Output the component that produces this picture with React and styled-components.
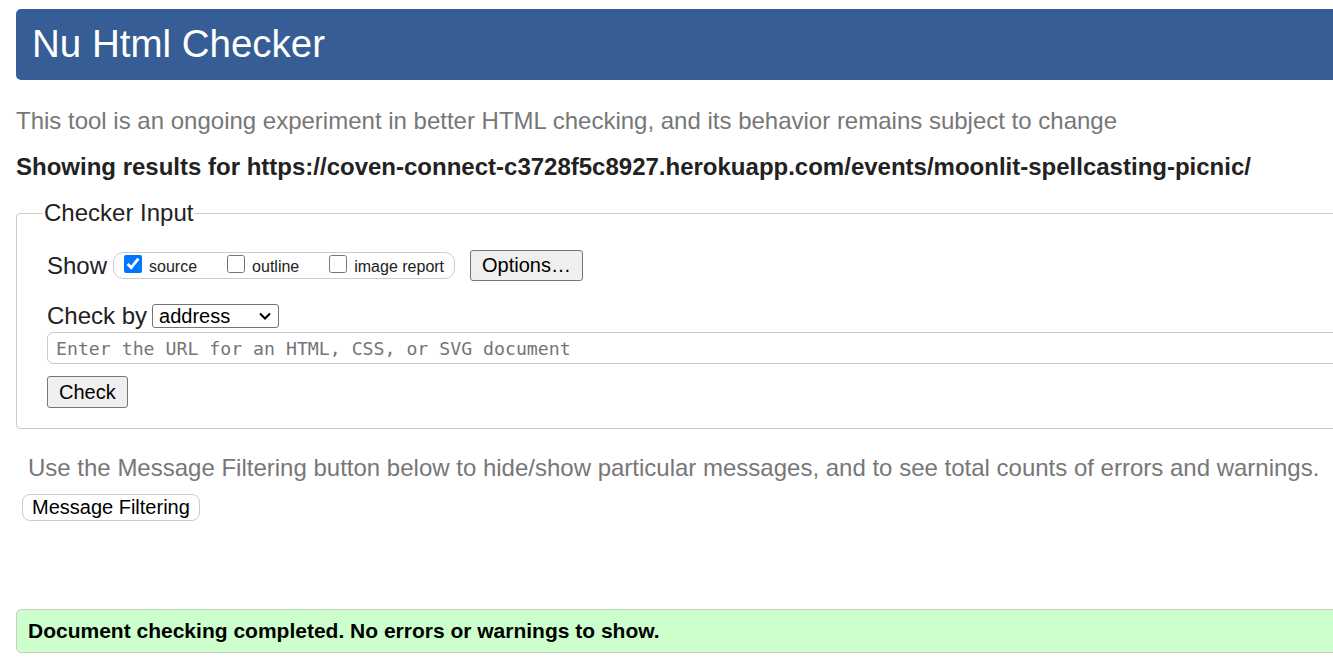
import React from "react";
import styled, { createGlobalStyle } from "styled-components";

const Global = createGlobalStyle`
  html, body { margin: 0; padding: 0; overflow: hidden; background: #fff; }
  body { font-family: "Liberation Sans", Arial, sans-serif; color: #222; }
`;

const Page = styled.div`
  width: 1400px;
  padding: 9px 0 0 16px;
  display: flex;
  flex-direction: column;
`;

const Header = styled.header`
  height: 71px;
  background: #365d95;
  border-radius: 5px 0 0 5px;
  display: flex;
  align-items: center;
  padding-left: 16px;
`;

const Title = styled.h1`
  margin: 0;
  font-size: 38.5px;
  font-weight: normal;
  color: #fff;
  line-height: 1;
`;

const Intro = styled.p`
  margin: 27px 0 0;
  font-size: 24px;
  line-height: 28px;
  color: #777;
`;

const Showing = styled.p`
  margin: 18px 0 0;
  font-size: 24px;
  line-height: 28px;
  font-weight: bold;
  color: #222;
`;

const Fieldset = styled.fieldset`
  margin: 18px 0 0;
  padding: 23px 0 20px 30px;
  border: 1px solid #ccc;
  border-radius: 4px;
  min-width: 0;
`;

const Legend = styled.legend`
  font-size: 24px;
  line-height: 28px;
  padding: 0 1px;
  margin-left: -4px;
  color: #222;
`;

const Row = styled.div`
  display: flex;
  align-items: center;
  margin-top: ${(p) => p.$mt || 0}px;
`;

const Label = styled.span`
  font-size: 24px;
  line-height: 28px;
  color: #222;
`;

const Group = styled.div`
  display: flex;
  align-items: center;
  height: 25px;
  margin-left: 6px;
  padding: 0 10px 0 10px;
  border: 1px solid #ccc;
  border-radius: 10px;
  gap: 30px;
`;

const Opt = styled.label`
  display: flex;
  align-items: center;
  gap: 7px;
  font-size: 16px;
  color: #222;
  padding-top: 2px;
`;

const Box = styled.input`
  width: 18px;
  height: 18px;
  flex: 0 0 18px;
  margin: -6px 0 0 0;
  accent-color: #0075ff;
`;

const Button = styled.button`
  font-family: "Liberation Sans", Arial, sans-serif;
  font-size: 20px;
  color: #000;
  height: ${(p) => p.$h || 32}px;
  padding: 0 ${(p) => p.$px || 11}px;
  background: ${(p) => (p.$soft ? "#fff" : "#efefef")};
  border: 1px solid ${(p) => (p.$soft ? "#ccc" : "#767676")};
  border-radius: ${(p) => (p.$soft ? 8 : 3)}px;
  margin-left: ${(p) => p.$ml || 0}px;
  align-self: flex-start;
`;

const Select = styled.div`
  width: 127px;
  height: 24px;
  box-sizing: border-box;
  border: 1px solid #767676;
  border-radius: 3px;
  margin-left: 5px;
  font-size: 20px;
  line-height: 22px;
  padding: 0 6px;
  color: #000;
  display: flex;
  align-items: center;
  justify-content: space-between;
`;

const UrlInput = styled.input`
  margin-top: 2px;
  height: 32px;
  box-sizing: border-box;
  width: 1400px;
  border: 1px solid #ccc;
  border-radius: 6px;
  padding: 0 8px;
  font-family: "DejaVu Sans Mono", "Liberation Mono", monospace;
  font-size: 18.2px;
  &::placeholder { color: #757575; }
`;

const Hint = styled.p`
  margin: 25px 0 0 12px;
  font-size: 24px;
  line-height: 28px;
  color: #777;
`;

const Success = styled.div`
  margin-top: 88px;
  height: 44px;
  box-sizing: border-box;
  background: #ccffcc;
  border: 1px solid #ccc;
  border-radius: 5px 0 0 5px;
  display: flex;
  align-items: center;
  padding-left: 11px;
  font-size: 21px;
  font-weight: bold;
  color: #000;
`;

export default function App() {
  return (
    <>
      <Global />
      <Page>
        <Header>
          <Title>Nu Html Checker</Title>
        </Header>
        <Intro>
          This tool is an ongoing experiment in better HTML checking, and its behavior remains subject to change
        </Intro>
        <Showing>
          Showing results for https://coven-connect-c3728f5c8927.herokuapp.com/events/moonlit-spellcasting-picnic/
        </Showing>
        <Fieldset>
          <Legend>Checker Input</Legend>
          <Row>
            <Label>Show</Label>
            <Group>
              <Opt>
                <Box type="checkbox" defaultChecked />
                source
              </Opt>
              <Opt>
                <Box type="checkbox" />
                outline
              </Opt>
              <Opt>
                <Box type="checkbox" />
                image report
              </Opt>
            </Group>
            <Button $h={31} $ml={15}>Options…</Button>
          </Row>
          <Row $mt={21}>
            <Label>Check by</Label>
            <Select>
              <span>address</span>
              <svg width="14" height="10" viewBox="0 0 14 10">
                <path d="M2 2.5 L7 7.5 L12 2.5" fill="none" stroke="#000" strokeWidth="2" />
              </svg>
            </Select>
          </Row>
          <UrlInput placeholder="Enter the URL for an HTML, CSS, or SVG document" />
          <Row $mt={12}>
            <Button $h={32} $px={11}>Check</Button>
          </Row>
        </Fieldset>
        <Hint>
          Use the Message Filtering button below to hide/show particular messages, and to see total counts of errors and warnings.
        </Hint>
        <Row $mt={12}>
          <Button $soft $h={27} $px={9} $ml={6}>Message Filtering</Button>
        </Row>
        <Success>Document checking completed. No errors or warnings to show.</Success>
      </Page>
    </>
  );
}
